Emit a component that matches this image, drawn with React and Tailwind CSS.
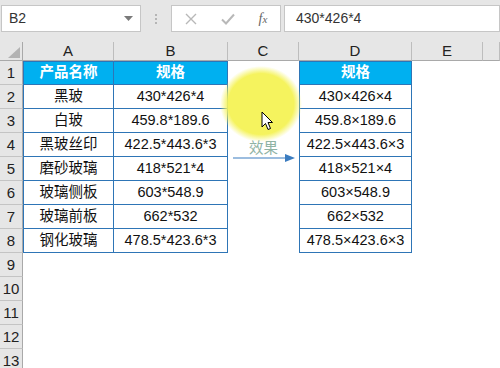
import React from "react";

const rows = [
  ["产品名称", "规格", "规格"],
  ["黑玻", "430*426*4", "430×426×4"],
  ["白玻", "459.8*189.6", "459.8×189.6"],
  ["黑玻丝印", "422.5*443.6*3", "422.5×443.6×3"],
  ["磨砂玻璃", "418*521*4", "418×521×4"],
  ["玻璃侧板", "603*548.9", "603×548.9"],
  ["玻璃前板", "662*532", "662×532"],
  ["钢化玻璃", "478.5*423.6*3", "478.5×423.6×3"],
];

const font = "font-['Liberation_Sans','Noto_Sans_CJK_SC',sans-serif]";

function RowHead({ n }) {
  return (
    <div className="h-[24px] bg-[#e6e6e6] border-r border-b border-r-[#a9a9a9] border-b-[#c4c4c4] flex items-center justify-center text-[15px] text-[#222] pt-[2px]">
      {n}
    </div>
  );
}

export default function App() {
  const extra = [9, 10, 11, 12, 13];
  return (
    <div className={`relative w-[500px] h-[368px] overflow-hidden bg-[#e6e6e6] ${font}`}>
      {/* toolbar */}
      <div className="h-[42px] flex items-start pt-[5px]">
        <div className="ml-[1px] w-[140px] h-[27px] bg-white border border-[#c6c6c6] flex items-center justify-between pl-[7px] pr-[7px]">
          <span className="text-[14px] text-[#333]">B2</span>
          <svg width="9" height="5" viewBox="0 0 9 5"><path d="M0 0 L9 0 L4.5 5 Z" fill="#7a7a7a" /></svg>
        </div>
        <div className="w-[30px] h-[27px] flex flex-col items-center justify-center gap-[2px]">
          <div className="w-[2px] h-[2px] bg-[#b5b5b5]" />
          <div className="w-[2px] h-[2px] bg-[#b5b5b5]" />
          <div className="w-[2px] h-[2px] bg-[#b5b5b5]" />
        </div>
        <div className="w-[110px] h-[27px] bg-white border border-[#c6c6c6] flex items-center">
          <div className="w-[38px] flex justify-center">
            <svg width="12" height="12" viewBox="0 0 12 12"><path d="M1 1 L11 11 M11 1 L1 11" stroke="#b8b8b8" strokeWidth="1.4" /></svg>
          </div>
          <div className="w-[36px] flex justify-center">
            <svg width="14" height="12" viewBox="0 0 14 12"><path d="M1 6.5 L5 10.5 L13 1.5" stroke="#b8b8b8" strokeWidth="2" fill="none" /></svg>
          </div>
          <div className="w-[34px] flex justify-center">
            <span className="font-['Liberation_Serif',serif] italic text-[14px] text-[#666]">f<span className="text-[11px]">x</span></span>
          </div>
        </div>
        <div className="ml-[3px] flex-1 h-[27px] bg-white border border-[#c6c6c6] flex items-center pl-[11px]">
          <span className="text-[14px] text-[#333]">430*426*4</span>
        </div>
      </div>

      {/* grid */}
      <div className="grid grid-cols-[23px_91px_114px_71px_113px_71px_1fr]">
        {/* column header */}
        <div className="h-[19px] bg-[#e6e6e6] border-r border-b border-r-[#a9a9a9] border-b-[#a9a9a9] flex items-end justify-end pr-[2px] pb-[2px]">
          <svg width="12" height="11" viewBox="0 0 12 11"><path d="M12 0 L12 11 L0 11 Z" fill="#b3b3b3" /></svg>
        </div>
        {["A", "B", "C", "D", "E", ""].map((c, i) => (
          <div key={i} className="h-[19px] bg-[#e6e6e6] border-r border-b border-r-[#bdbdbd] border-b-[#a9a9a9] flex items-center justify-center text-[15px] text-[#222]">
            {c}
          </div>
        ))}

        {rows.map((r, i) => {
          const head = i === 0;
          const cell = head
            ? "bg-[#00b0f0] text-white font-bold"
            : "bg-white text-[#111]";
          const top = head ? "border-t" : "";
          return (
            <React.Fragment key={i}>
              <RowHead n={i + 1} />
              <div className={`h-[24px] border-l border-r border-b ${top} border-[#2e75b6] ${cell} flex items-center justify-center text-[14.5px]`}>
                {r[0]}
              </div>
              <div className={`h-[24px] border-r border-b ${top} border-[#2e75b6] ${cell} flex items-center justify-center text-[14.5px]`}>
                {r[1]}
              </div>
              <div className="h-[24px] bg-white" />
              <div className={`h-[24px] border-l border-r border-b ${top} border-[#2e75b6] ${cell} flex items-center justify-center text-[14.5px]`}>
                {r[2]}
              </div>
              <div className="h-[24px] bg-white" />
              <div className="h-[24px] bg-white" />
            </React.Fragment>
          );
        })}
        {extra.map((n) => (
          <React.Fragment key={n}>
            <RowHead n={n} />
            <div className="h-[24px] bg-white col-span-6" />
          </React.Fragment>
        ))}
      </div>

      {/* highlight circle */}
      <div className="absolute left-[220px] top-[66px] w-[82px] h-[76px] rounded-full bg-[radial-gradient(closest-side,#f5f35e_0%,#f5f35e_80%,rgba(245,243,94,0.35)_93%,rgba(245,243,94,0)_100%)]" />
      {/* cursor */}
      <svg className="absolute left-[261px] top-[111px]" width="13" height="20" viewBox="0 0 13 20">
        <path d="M1 1 L1 16 L4.5 12.5 L7 18.5 L9.5 17.5 L7 11.5 L11.5 11.5 Z" fill="white" stroke="black" strokeWidth="1" strokeLinejoin="round" />
      </svg>
      {/* label and arrow */}
      <div className="absolute left-[249px] top-[136px] text-[14.5px] text-[#8fb3a4] font-['Noto_Sans_CJK_SC',sans-serif]">效果</div>
      <svg className="absolute left-[232px] top-[153px]" width="64" height="10" viewBox="0 0 64 10">
        <path d="M1 5 L55 5" stroke="#3b7cc0" strokeWidth="1.2" />
        <path d="M53 1 L63 5 L53 9 Z" fill="#3b7cc0" />
      </svg>
    </div>
  );
}
